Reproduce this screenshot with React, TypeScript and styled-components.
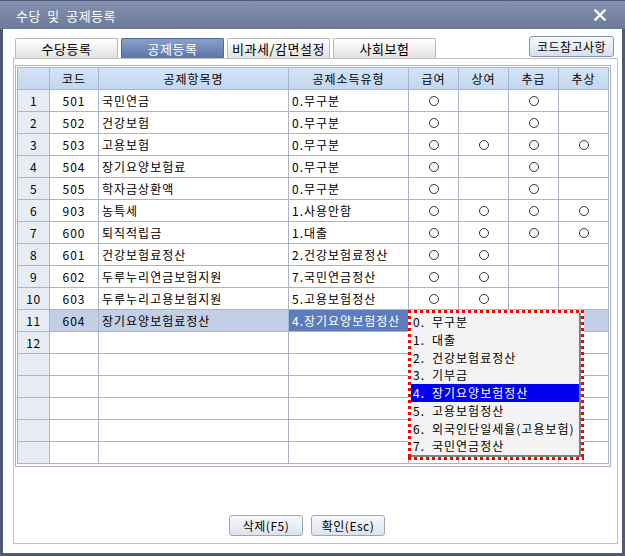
import React from "react";
import styled, { createGlobalStyle } from "styled-components";

const GlobalStyle = createGlobalStyle`
  html, body {
    margin: 0;
    padding: 0;
    background: #4f5a78;
  }
  body {
    font-family: "Noto Sans CJK KR", "Noto Sans", sans-serif;
    font-size: 12px;
    color: #000;
  }
`;

const COLS = "32px 49px 190px 120px 50px 50px 50px 50px";
const LINE = "#aab4c6";

type Row = {
  code: string;
  name: string;
  type: string;
  marks: boolean[];
};

const rows: Row[] = [
  { code: "501", name: "국민연금", type: "0.무구분", marks: [true, false, true, false] },
  { code: "502", name: "건강보험", type: "0.무구분", marks: [true, false, true, false] },
  { code: "503", name: "고용보험", type: "0.무구분", marks: [true, true, true, true] },
  { code: "504", name: "장기요양보험료", type: "0.무구분", marks: [true, false, true, false] },
  { code: "505", name: "학자금상환액", type: "0.무구분", marks: [true, false, true, false] },
  { code: "903", name: "농특세", type: "1.사용안함", marks: [true, true, true, true] },
  { code: "600", name: "퇴직적립금", type: "1.대출", marks: [true, true, true, true] },
  { code: "601", name: "건강보험료정산", type: "2.건강보험료정산", marks: [true, true, false, false] },
  { code: "602", name: "두루누리연금보험지원", type: "7.국민연금정산", marks: [true, true, false, false] },
  { code: "603", name: "두루누리고용보험지원", type: "5.고용보험정산", marks: [true, true, false, false] },
  { code: "604", name: "장기요양보험료정산", type: "4.장기요양보험정산", marks: [false, false, false, false] },
];

const options = [
  "무구분",
  "대출",
  "건강보험료정산",
  "기부금",
  "장기요양보험정산",
  "고용보험정산",
  "외국인단일세율(고용보험)",
  "국민연금정산",
];

const SELECTED_ROW = 10;
const SELECTED_OPTION = 4;

export default function App() {
  return (
    <>
      <GlobalStyle />
      <Window>
        <TitleBar>
          <Title>수당 및 공제등록</Title>
          <CloseIcon width="12" height="12" viewBox="0 0 12 12">
            <path d="M1.5 1.5 L10.5 10.5 M10.5 1.5 L1.5 10.5" stroke="#fff" strokeWidth="2.4" strokeLinecap="square" />
          </CloseIcon>
        </TitleBar>
        <Body>
          <TabRow>
            <Tab>수당등록</Tab>
            <Tab $active>공제등록</Tab>
            <Tab>비과세/감면설정</Tab>
            <Tab>사회보험</Tab>
            <RefButton>코드참고사항</RefButton>
          </TabRow>
          <Panel>
            <GridFrame>
              <Table>
                <GridRow>
                  <HeadCell />
                  <HeadCell>코드</HeadCell>
                  <HeadCell>공제항목명</HeadCell>
                  <HeadCell>공제소득유형</HeadCell>
                  <HeadCell>급여</HeadCell>
                  <HeadCell>상여</HeadCell>
                  <HeadCell>추급</HeadCell>
                  <HeadCell>추상</HeadCell>
                </GridRow>
                {Array.from({ length: 17 }).map((_, i) => {
                  const r = rows[i];
                  const sel = i === SELECTED_ROW;
                  return (
                    <GridRow key={i}>
                      <NumCell>{i < 12 ? i + 1 : ""}</NumCell>
                      <Cell $center $sel={sel}>{r?.code}</Cell>
                      <Cell $sel={sel}>{r?.name}</Cell>
                      <Cell $current={sel}>{r?.type}</Cell>
                      {[0, 1, 2, 3].map((k) => (
                        <Cell key={k} $center $sel={sel}>
                          {r?.marks[k] ? <Mark /> : null}
                        </Cell>
                      ))}
                    </GridRow>
                  );
                })}
              </Table>
              <Popup>
                <OptionList>
                  {options.map((o, i) => (
                    <Option key={o} $active={i === SELECTED_OPTION}>
                      <OptNum>{i}.</OptNum>
                      {o}
                    </Option>
                  ))}
                </OptionList>
              </Popup>
            </GridFrame>
            <ButtonRow>
              <Button>삭제(F5)</Button>
              <Button>확인(Esc)</Button>
            </ButtonRow>
          </Panel>
        </Body>
      </Window>
    </>
  );
}

const Window = styled.div`
  width: 625px;
  height: 556px;
  box-sizing: border-box;
  background: #4f5a78;
  padding: 0 3px 3px 3px;
  display: flex;
  flex-direction: column;
`;

const TitleBar = styled.div`
  height: 29px;
  margin: 0 -3px;
  padding: 0 19px 0 16px;
  display: flex;
  align-items: center;
  justify-content: space-between;
  background: linear-gradient(#8591af, #6c7a9b);
  border-top: 1px solid #4f5a78;
  box-sizing: border-box;
`;

const Title = styled.div`
  color: #fff;
  font-size: 13px;
  letter-spacing: 0.5px;
  word-spacing: 3px;
`;

const CloseIcon = styled.svg`
  display: block;
`;

const Body = styled.div`
  flex: 1;
  background: #fff;
  display: flex;
  flex-direction: column;
  padding: 7px 4px 9px 10px;
`;

const TabRow = styled.div`
  display: flex;
  align-items: flex-end;
  height: 22px;
  padding-left: 2px;
`;

const Tab = styled.div<{ $active?: boolean }>`
  width: 103px;
  height: 20px;
  box-sizing: border-box;
  margin-right: 3px;
  display: flex;
  align-items: center;
  justify-content: center;
  font-size: 13px;
  letter-spacing: 0.5px;
  border: 1px solid ${(p) => (p.$active ? "#4d69a0" : "#b8b8b8")};
  border-bottom: none;
  border-radius: 2px 2px 0 0;
  color: ${(p) => (p.$active ? "#fff" : "#000")};
  background: ${(p) =>
    p.$active
      ? "linear-gradient(#8aa1c9, #5874aa)"
      : "linear-gradient(#ffffff, #e2e2e2)"};
`;

const RefButton = styled.div`
  margin-left: auto;
  margin-right: 4px;
  align-self: flex-start;
  width: 85px;
  height: 21px;
  box-sizing: border-box;
  display: flex;
  align-items: center;
  justify-content: center;
  font-size: 12px;
  letter-spacing: 0.5px;
  border: 1px solid #8592ae;
  border-radius: 3px;
  background: linear-gradient(#f8fafd, #d8dfeb);
`;

const Panel = styled.div`
  flex: 1;
  border: 1px solid #c3c3c3;
  padding: 6px 6px 0 1px;
  display: flex;
  flex-direction: column;
`;

const GridFrame = styled.div`
  position: relative;
  border: 1px solid ${LINE};
  padding: 1px 1px 2px 1px;
  width: fit-content;
`;

const Table = styled.div`
  border-left: 1px solid ${LINE};
  border-top: 1px solid ${LINE};
`;

const GridRow = styled.div`
  display: grid;
  grid-template-columns: ${COLS};
  height: 22px;
`;

const Cell = styled.div<{ $center?: boolean; $sel?: boolean; $current?: boolean }>`
  box-sizing: border-box;
  border-right: 1px solid ${LINE};
  border-bottom: 1px solid ${LINE};
  line-height: 21px;
  padding: 0 3px;
  letter-spacing: 1px;
  white-space: nowrap;
  overflow: hidden;
  display: flex;
  align-items: center;
  justify-content: ${(p) => (p.$center ? "center" : "flex-start")};
  background: ${(p) => (p.$current ? "#5d7cbd" : p.$sel ? "#c3cfe6" : "#fff")};
  color: ${(p) => (p.$current ? "#fff" : "#000")};
`;

const HeadCell = styled(Cell)`
  justify-content: center;
  background: linear-gradient(#d4e3f6, #c3d7f0);
`;

const NumCell = styled(Cell)`
  justify-content: center;
  letter-spacing: 0.5px;
  background: #e8ecf4;
`;

const Mark = styled.span`
  width: 10px;
  height: 10px;
  box-sizing: border-box;
  border: 1px solid #333;
  border-radius: 50%;
`;

const Popup = styled.div`
  position: absolute;
  left: 392px;
  top: 244px;
  width: 176px;
  padding: 3px;
  box-sizing: border-box;
  background:
    repeating-linear-gradient(90deg, #f00 0 3px, transparent 3px 6px) left top / 100% 3px no-repeat,
    repeating-linear-gradient(90deg, #f00 0 3px, transparent 3px 6px) left bottom / 100% 3px no-repeat,
    repeating-linear-gradient(180deg, #f00 0 3px, transparent 3px 6px) left top / 3px 100% no-repeat,
    repeating-linear-gradient(180deg, #f00 0 3px, transparent 3px 6px) right top / 3px 100% no-repeat,
    #fff;
`;

const OptionList = styled.div`
  background: #f4f4f4;
  border-right: 2px solid #808080;
  border-bottom: 2px solid #808080;
  overflow: hidden;
`;

const Option = styled.div<{ $active?: boolean }>`
  height: 17.75px;
  line-height: 18px;
  padding-left: 2px;
  letter-spacing: 1px;
  white-space: nowrap;
  background: ${(p) => (p.$active ? "#0000ee" : "transparent")};
  color: ${(p) => (p.$active ? "#fff" : "#000")};
`;

const OptNum = styled.span`
  display: inline-block;
  width: 19px;
`;

const ButtonRow = styled.div`
  margin-top: auto;
  display: flex;
  justify-content: center;
  gap: 8px;
  padding: 0 12px 7px 0;
`;

const Button = styled.div`
  width: 74px;
  height: 21px;
  box-sizing: border-box;
  display: flex;
  align-items: center;
  justify-content: center;
  font-size: 12px;
  letter-spacing: 0.5px;
  border: 1px solid #9aa6bf;
  border-radius: 3px;
  background: linear-gradient(#f7f9fc, #dce2ed);
`;
